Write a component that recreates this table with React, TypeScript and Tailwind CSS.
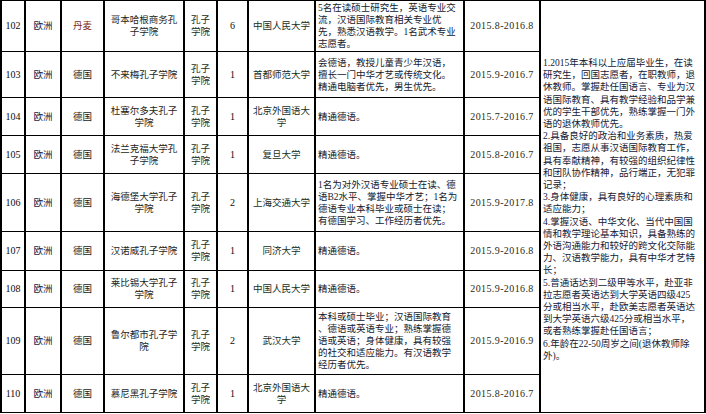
type Row = {
  no: string;
  country: string;
  countryRed?: boolean;
  inst: string[];
  count: string;
  univ: string[];
  desc: string[];
  date: string;
  h: string;
};

const rows: Row[] = [
  {
    no: "102",
    country: "丹麦",
    countryRed: true,
    inst: ["哥本哈根商务孔", "子学院"],
    count: "6",
    univ: ["中国人民大学"],
    desc: [
      "5名在读硕士研究生，英语专业交",
      "流，汉语国际教育相关专业优",
      "先，熟悉汉语教学。1名武术专业",
      "志愿者。",
    ],
    date: "2015.8-2016.8",
    h: "h-[51px]",
  },
  {
    no: "103",
    country: "德国",
    inst: ["不来梅孔子学院"],
    count: "1",
    univ: ["首都师范大学"],
    desc: [
      "会德语，教授儿童青少年汉语，",
      "擅长一门中华才艺或传统文化。",
      "精通电脑者优先，男生优先。",
    ],
    date: "2015.9-2016.7",
    h: "h-[46px]",
  },
  {
    no: "104",
    country: "德国",
    inst: ["杜塞尔多夫孔子", "学院"],
    count: "1",
    univ: ["北京外国语大", "学"],
    desc: ["精通德语。"],
    date: "2015.7-2016.7",
    h: "h-[38px]",
  },
  {
    no: "105",
    country: "德国",
    inst: ["法兰克福大学孔", "子学院"],
    count: "1",
    univ: ["复旦大学"],
    desc: ["精通德语。"],
    date: "2015.8-2016.7",
    h: "h-[38px]",
  },
  {
    no: "106",
    country: "德国",
    inst: ["海德堡大学孔子", "学院"],
    count: "2",
    univ: ["上海交通大学"],
    desc: [
      "1名为对外汉语专业硕士在读、德",
      "语B2水平、掌握中华才艺；1名为",
      "德语专业本科毕业或硕士在读；",
      "有德国学习、工作经历者优先。",
    ],
    date: "2015.9-2017.8",
    h: "h-[58px]",
  },
  {
    no: "107",
    country: "德国",
    inst: ["汉诺威孔子学院"],
    count: "1",
    univ: ["同济大学"],
    desc: ["精通德语。"],
    date: "2015.9-2016.8",
    h: "h-[39px]",
  },
  {
    no: "108",
    country: "德国",
    inst: ["莱比锡大学孔子", "学院"],
    count: "1",
    univ: ["中国人民大学"],
    desc: ["精通德语。"],
    date: "2015.9-2016.8",
    h: "h-[37px]",
  },
  {
    no: "109",
    country: "德国",
    inst: ["鲁尔都市孔子学", "院"],
    count: "2",
    univ: ["武汉大学"],
    desc: [
      "本科或硕士毕业；汉语国际教育",
      "、德语或英语专业；熟练掌握德",
      "语或英语；身体健康，具有较强",
      "的社交和适应能力。有汉语教学",
      "经历者优先。",
    ],
    date: "2015.9-2016.9",
    h: "h-[67px]",
  },
  {
    no: "110",
    country: "德国",
    inst: ["慕尼黑孔子学院"],
    count: "1",
    univ: ["北京外国语大", "学"],
    desc: ["精通德语。"],
    date: "2015.8-2016.7",
    h: "h-[38px]",
  },
];

const requirements = [
  "1.2015年本科以上应届毕业生，在读",
  "研究生，回国志愿者，在职教师，退",
  "休教师。掌握赴任国语言、专业为汉",
  "语国际教育、具有教学经验和品学兼",
  "优的学生干部优先，熟练掌握一门外",
  "语的退休教师优先。",
  "2.具备良好的政治和业务素质，热爱",
  "祖国，志愿从事汉语国际教育工作，",
  "具有奉献精神，有较强的组织纪律性",
  "和团队协作精神，品行端正，无犯罪",
  "记录；",
  "3.身体健康，具有良好的心理素质和",
  "适应能力；",
  "4.掌握汉语、中华文化、当代中国国",
  "情和教学理论基本知识，具备熟练的",
  "外语沟通能力和较好的跨文化交际能",
  "力、汉语教学能力，具有中华才艺特",
  "长；",
  "5.普通话达到二级甲等水平，赴亚非",
  "拉志愿者英语达到大学英语四级425",
  "分或相当水平，赴欧美志愿者英语达",
  "到大学英语六级425分或相当水平，",
  "或者熟练掌握赴任国语言；",
  "6.年龄在22-50周岁之间(退休教师除",
  "外)。",
];

function Lines({ lines }: { lines: string[] }) {
  return (
    <>
      {lines.map((l, i) => (
        <div key={i} className="whitespace-nowrap">
          {l}
        </div>
      ))}
    </>
  );
}

const cell = "border-y border-x-2 border-black align-middle p-0";

export default function App() {
  return (
    <div
      className="w-[706px] h-[414px] overflow-hidden bg-white text-[9.5px] leading-[12px]"
      style={{ fontFamily: '"Liberation Serif", "Noto Sans CJK SC", serif' }}
    >
      <table className="table-fixed border-collapse w-[704px]">
        <colgroup>
          <col className="w-[24px]" />
          <col className="w-[36px]" />
          <col className="w-[43px]" />
          <col className="w-[80px]" />
          <col className="w-[33px]" />
          <col className="w-[31px]" />
          <col className="w-[67px]" />
          <col className="w-[149px]" />
          <col className="w-[76px]" />
          <col className="w-[165px]" />
        </colgroup>
        <tbody>
          {rows.map((r, i) => (
            <tr key={r.no} className={r.h}>
              <td className={`${cell} text-center text-[10px] text-[#0d0d0d]`}>{r.no}</td>
              <td className={`${cell} text-center text-[#24183a]`}>欧洲</td>
              <td
                className={`${cell} text-center ${
                  r.countryRed ? "text-[#7e2a18]" : "text-[#222214]"
                }`}
              >
                {r.country}
              </td>
              <td className={`${cell} text-center text-[#1c261c]`}>
                <Lines lines={r.inst} />
              </td>
              <td className={`${cell} text-center text-[#19301c]`}>
                <Lines lines={["孔子", "学院"]} />
              </td>
              <td className={`${cell} text-center text-[10px] text-[#0d0d0d]`}>{r.count}</td>
              <td className={`${cell} text-center text-[#16301f]`}>
                <Lines lines={r.univ} />
              </td>
              <td className={`${cell} pl-[2px] text-left text-[#14202c]`}>
                <Lines lines={r.desc} />
              </td>
              <td className={`${cell} text-center text-[10px] tracking-[0.4px] text-[#2a2a14]`}>
                {r.date}
              </td>
              {i === 0 && (
                <td
                  rowSpan={rows.length}
                  className="border-y border-x-2 border-black p-0 pl-[2px] pt-[56px] align-top text-left text-[#142036] leading-[12.2px]"
                >
                  <Lines lines={requirements} />
                </td>
              )}
            </tr>
          ))}
        </tbody>
      </table>
    </div>
  );
}
